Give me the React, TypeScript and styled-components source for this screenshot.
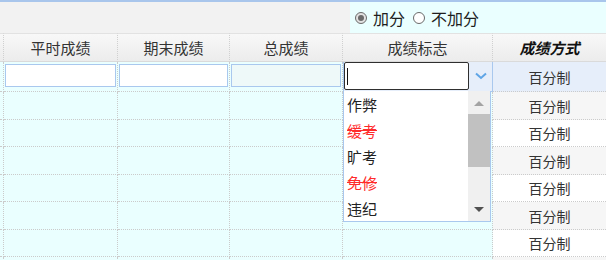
import React from "react";
import styled, { createGlobalStyle, css } from "styled-components";

const Global = createGlobalStyle`
  html, body { margin: 0; padding: 0; background: #ffffff; }
  * { box-sizing: border-box; }
  body { font-family: "Noto Sans CJK SC", "Noto Sans", sans-serif; color: #333; }
`;

const Page = styled.div`
  width: 606px;
  height: 260px;
  overflow: hidden;
  border-top: 2px solid #a9c6ec;
  display: flex;
  flex-direction: column;
`;

const Toolbar = styled.div`
  height: 31px;
  display: flex;
  background: #f2f2f2;
  flex-shrink: 0;
`;

const Spacer = styled.div`
  flex: 1;
`;

const RadioGroup = styled.div`
  width: 256px;
  background: #eaffff;
  display: flex;
  align-items: center;
  padding-left: 5px;
  gap: 8px;
`;

const RadioLabel = styled.label`
  display: flex;
  align-items: center;
  gap: 6px;
  font-size: 16px;
  color: #1e1e1e;
  line-height: 1;
`;

const RadioCircle = styled.span<{ $checked?: boolean }>`
  width: 12px;
  height: 12px;
  border-radius: 50%;
  border: 1px solid #6a6a6a;
  background: ${(p) => (p.$checked ? "#e2e2e2" : "#fff")};
  display: flex;
  align-items: center;
  justify-content: center;
  &::after {
    content: "";
    width: 6px;
    height: 6px;
    border-radius: 50%;
    background: ${(p) => (p.$checked ? "#6a6a6a" : "transparent")};
  }
`;

const Grid = styled.div`
  display: grid;
  grid-template-columns: 4px 114px 112px 113px 150px 113px;
  grid-auto-rows: auto;
`;

const HeadCell = styled.div<{ $strong?: boolean }>`
  height: 29px;
  border-top: 1px solid #e2e2e2;
  border-bottom: 1px solid #dadada;
  border-right: 1px dotted #d0d0d0;
  background: linear-gradient(#f8f8f8, #ececec);
  display: flex;
  align-items: center;
  justify-content: center;
  font-size: 15px;
  color: #333;
  ${(p) =>
    p.$strong &&
    css`
      font-weight: bold;
      font-style: italic;
      color: #111;
      border-right: none;
    `}
`;

const Cell = styled.div<{ $h: number; $bg?: string; $last?: boolean }>`
  height: ${(p) => p.$h}px;
  background: ${(p) => p.$bg || "#eaffff"};
  border-bottom: 1px dotted #cbcbcb;
  border-right: ${(p) => (p.$last ? "none" : "1px dotted #cbcbcb")};
  display: flex;
  align-items: center;
  justify-content: center;
  position: relative;
  font-size: 14px;
  color: #333;
`;

const EditInput = styled.input<{ $soft?: boolean }>`
  width: calc(100% - 2px);
  height: 23px;
  margin-top: -3px;
  border: 1px solid #a9c8ee;
  background: ${(p) => (p.$soft ? "#eef9f9" : "#ffffff")};
  outline: none;
  padding: 0 3px;
  font: inherit;
`;

const ComboCell = styled.div`
  height: 30px;
  background: #e6eefa;
  border: 1px solid #a9c8ee;
  border-top: none;
  display: flex;
  align-items: flex-start;
  position: relative;
`;

const ComboInput = styled.div`
  width: 125px;
  height: 28px;
  border: 1px solid #2f2f2f;
  border-radius: 2px;
  background: #fff;
  display: flex;
  align-items: center;
  padding-left: 2px;
`;

const Caret = styled.span`
  width: 1px;
  height: 17px;
  background: #111;
`;

const Arrow = styled.div`
  flex: 1;
  height: 28px;
  display: flex;
  align-items: center;
  justify-content: center;
`;

const Popup = styled.div`
  position: absolute;
  top: 100%;
  left: -1px;
  width: 148px;
  height: 131px;
  background: #fff;
  border: 1px solid #a9c8ee;
  border-top: none;
  display: flex;
  z-index: 5;
`;

const List = styled.ul`
  list-style: none;
  margin: 0;
  padding: 0;
  flex: 1;
`;

const Item = styled.li<{ $void?: boolean }>`
  height: 26px;
  display: flex;
  align-items: center;
  padding-left: 3px;
  font-size: 15px;
  color: ${(p) => (p.$void ? "#ff2a2a" : "#222")};
`;

const Struck = styled.span`
  position: relative;
  &::after {
    content: "";
    position: absolute;
    left: 0;
    right: 0;
    top: 52%;
    height: 1px;
    background: #ff2a2a;
  }
`;

const ScrollBar = styled.div`
  width: 22px;
  background: #f0f0f0;
  display: flex;
  flex-direction: column;
  align-items: stretch;
`;

const ScrollBtn = styled.div`
  height: 23px;
  display: flex;
  align-items: center;
  justify-content: center;
`;

const Thumb = styled.div`
  height: 53px;
  background: #c1c1c1;
`;

const ScrollFill = styled.div`
  flex: 1;
`;

const headers = ["平时成绩", "期末成绩", "总成绩", "成绩标志"];
const heights = [28, 27, 28, 27, 28, 27, 28];
const flags = [
  { t: "作弊", v: false },
  { t: "缓考", v: true },
  { t: "旷考", v: false },
  { t: "免修", v: true },
  { t: "违纪", v: false },
];

export default function App() {
  return (
    <>
      <Global />
      <Page>
        <Toolbar>
          <Spacer />
          <RadioGroup>
            <RadioLabel>
              <RadioCircle $checked />
              加分
            </RadioLabel>
            <RadioLabel>
              <RadioCircle />
              不加分
            </RadioLabel>
          </RadioGroup>
        </Toolbar>
        <Grid>
          <HeadCell />
          {headers.map((h) => (
            <HeadCell key={h}>{h}</HeadCell>
          ))}
          <HeadCell $strong>成绩方式</HeadCell>

          <Cell $h={30} />
          <Cell $h={30}>
            <EditInput />
          </Cell>
          <Cell $h={30}>
            <EditInput />
          </Cell>
          <Cell $h={30}>
            <EditInput $soft />
          </Cell>
          <ComboCell>
            <ComboInput>
              <Caret />
            </ComboInput>
            <Arrow>
              <svg width="12" height="8" viewBox="0 0 12 8">
                <path d="M1 1.5 L6 6 L11 1.5" fill="none" stroke="#5fa5e6" strokeWidth="2" />
              </svg>
            </Arrow>
            <Popup>
              <List>
                {flags.map((f) => (
                  <Item key={f.t} $void={f.v}>
                    {f.v ? <Struck>{f.t}</Struck> : f.t}
                  </Item>
                ))}
              </List>
              <ScrollBar>
                <ScrollBtn>
                  <svg width="10" height="6" viewBox="0 0 10 6">
                    <path d="M0 6 L5 1 L10 6 Z" fill="#a3a3a3" />
                  </svg>
                </ScrollBtn>
                <Thumb />
                <ScrollFill />
                <ScrollBtn>
                  <svg width="10" height="6" viewBox="0 0 10 6">
                    <path d="M0 0 L5 5 L10 0 Z" fill="#505050" />
                  </svg>
                </ScrollBtn>
              </ScrollBar>
            </Popup>
          </ComboCell>
          <Cell $h={30} $bg="#e6eefa" $last>
            百分制
          </Cell>

          {heights.map((h, i) => (
            <React.Fragment key={i}>
              <Cell $h={h} />
              <Cell $h={h} />
              <Cell $h={h} />
              <Cell $h={h} />
              <Cell $h={h} />
              <Cell $h={h} $bg={i % 2 === 0 ? "#f6f6f6" : "#ffffff"} $last>
                {i < 6 ? "百分制" : ""}
              </Cell>
            </React.Fragment>
          ))}
        </Grid>
      </Page>
    </>
  );
}
